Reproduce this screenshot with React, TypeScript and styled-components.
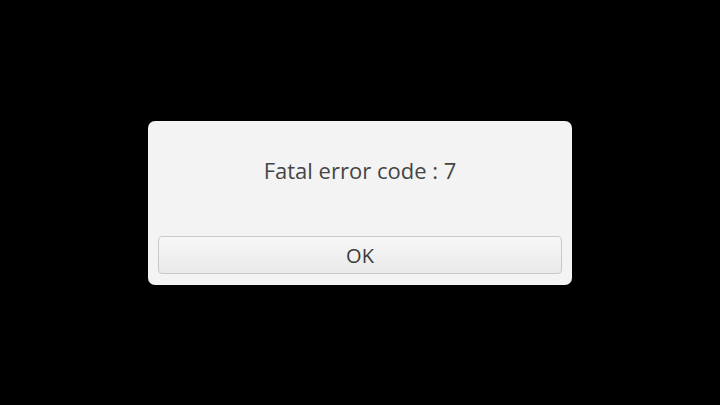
import styled, { createGlobalStyle } from "styled-components";

const GlobalStyle = createGlobalStyle`
  html, body {
    margin: 0;
    padding: 0;
    background: #000;
  }
`;

const Screen = styled.div`
  width: 720px;
  height: 405px;
  background: #000;
  display: flex;
  align-items: center;
  justify-content: center;
  font-family: "Open Sans", "Noto Sans", sans-serif;
`;

const Dialog = styled.div`
  width: 424px;
  height: 164px;
  margin-top: 1px;
  box-sizing: border-box;
  background: #f3f3f3;
  border-radius: 7px;
  padding: 0 10px 11px;
  display: flex;
  flex-direction: column;
`;

const Message = styled.div`
  flex: 1;
  display: flex;
  align-items: center;
  justify-content: center;
  padding-bottom: 17px;
  font-size: 22px;
  color: #454545;
`;

const Button = styled.button`
  height: 38px;
  width: 100%;
  box-sizing: border-box;
  border: 1px solid #c9c9c9;
  border-radius: 4px;
  background: linear-gradient(#f7f7f7, #e9e9e9);
  font-family: inherit;
  font-size: 20px;
  color: #3a3a3a;
  padding: 0;
`;

export default function App() {
  return (
    <>
      <GlobalStyle />
      <Screen>
        <Dialog>
          <Message>Fatal error code : 7</Message>
          <Button>OK</Button>
        </Dialog>
      </Screen>
    </>
  );
}
